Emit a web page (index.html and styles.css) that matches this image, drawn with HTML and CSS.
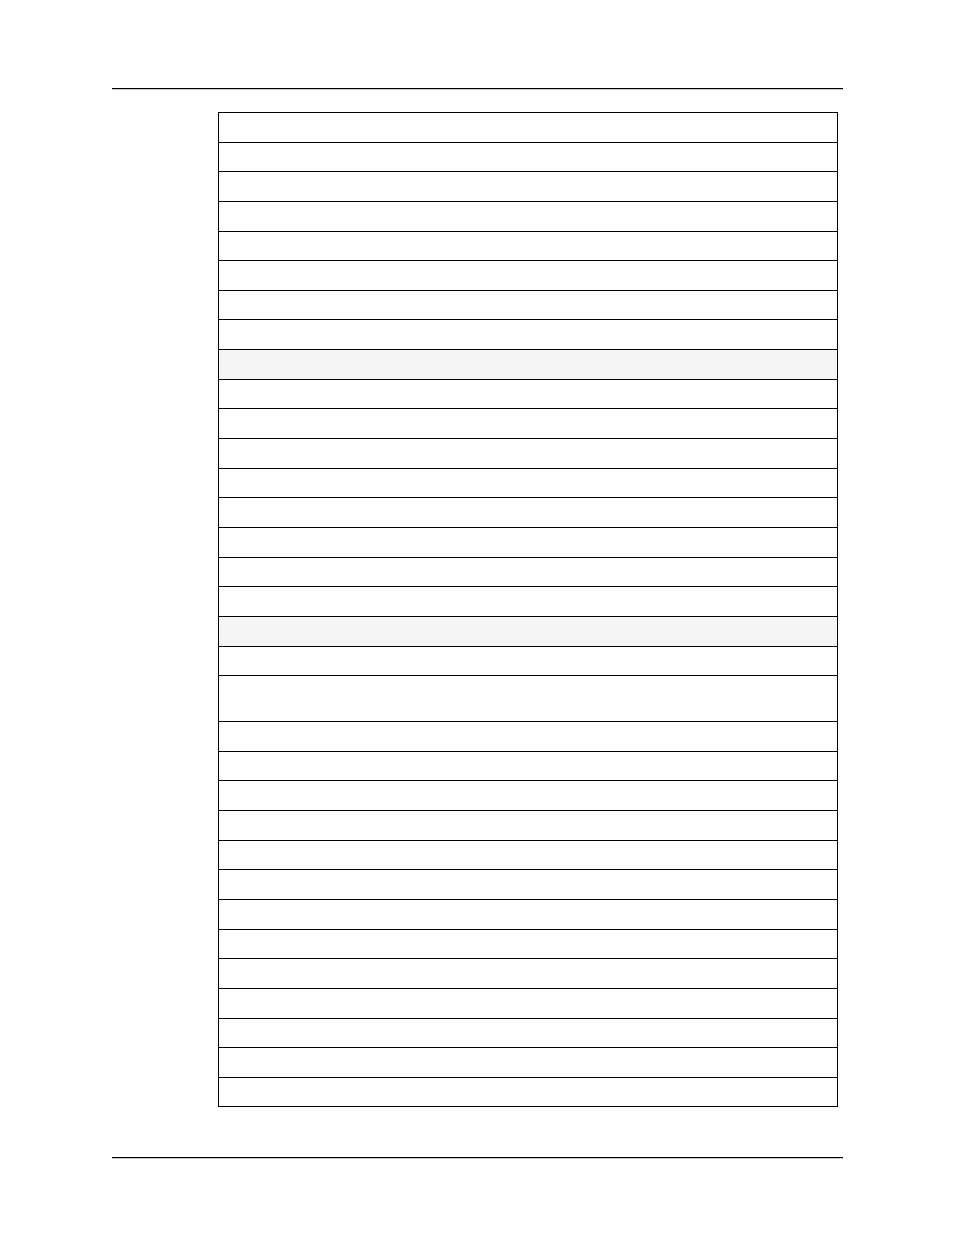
FILE: index.html
```html
<!DOCTYPE html>
<html>
<head>
<meta charset="utf-8">
<link rel="stylesheet" href="styles.css">
</head>
<body>
<div class="page">
  <div class="rule rule-top"></div>
  <div class="grid">
    <div class="row"></div>
    <div class="row"></div>
    <div class="row"></div>
    <div class="row"></div>
    <div class="row"></div>
    <div class="row"></div>
    <div class="row"></div>
    <div class="row"></div>
    <div class="row shaded"></div>
    <div class="row"></div>
    <div class="row"></div>
    <div class="row"></div>
    <div class="row"></div>
    <div class="row"></div>
    <div class="row"></div>
    <div class="row"></div>
    <div class="row"></div>
    <div class="row shaded"></div>
    <div class="row"></div>
    <div class="row tall"></div>
    <div class="row"></div>
    <div class="row"></div>
    <div class="row"></div>
    <div class="row"></div>
    <div class="row"></div>
    <div class="row"></div>
    <div class="row"></div>
    <div class="row"></div>
    <div class="row"></div>
    <div class="row"></div>
    <div class="row"></div>
    <div class="row"></div>
    <div class="row last"></div>
  </div>
  <div class="rule rule-bottom"></div>
</div>
</body>
</html>
```
FILE: styles.css
```css
html, body {
  margin: 0;
  padding: 0;
  background: #fff;
  font-family: "Liberation Sans", Arial, sans-serif;
}
.page {
  width: 731px;
  padding: 88px 0 0 112px;
}
.rule {
  height: 1px;
  background: #000;
  border-bottom: 1px solid #c8c8c8;
}
.grid {
  margin: 22px 0 0 106px;
  width: 618px;
  border: 1px solid #000;
  display: flex;
  flex-direction: column;
}
.row {
  height: 28.65px;
  border-bottom: 1px solid #000;
}
.row.last {
  border-bottom: none;
  height: 28.3px;
}
.row.tall {
  height: 45px;
}
.row.shaded {
  background: #f5f5f5;
}
.rule-bottom {
  margin-top: 50px;
}
```
